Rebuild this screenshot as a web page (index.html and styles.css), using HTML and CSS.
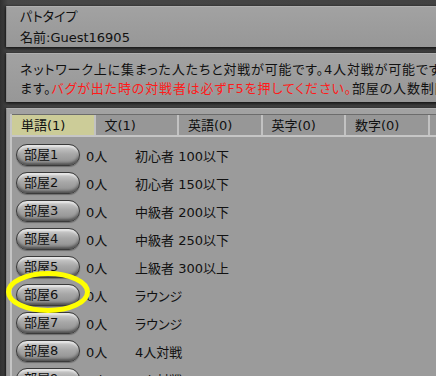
FILE: index.html
```html
<!DOCTYPE html>
<html lang="ja">
<head>
    <meta charset="UTF-8">
    <title>パトタイプ</title>
    <link rel="stylesheet" href="styles.css">
</head>
<body>
    <div class="screen">
        <!-- header -->
        <div class="panel info">
            <div class="line">パトタイプ</div>
            <div class="line">名前:Guest16905</div>
        </div>

        <!-- notice -->
        <div class="panel notice">
            <div class="line">ネットワーク上に集まった人たちと対戦が可能です。4人対戦が可能です。</div>
            <div class="line">ます。<span class="warn">バグが出た時の対戦者は必ずF5を押してください。</span>部屋の人数制限があります。</div>
        </div>

        <!-- room list -->
        <div class="panel rooms">
            <div class="box">
                <div class="tabs">
                    <div class="tab active">単語(1)</div>
                    <div class="tab">文(1)</div>
                    <div class="tab">英語(0)</div>
                    <div class="tab">英字(0)</div>
                    <div class="tab">数字(0)</div>
                    <div class="tab"></div>
                </div>
                <div class="list">
                    <div class="row"><div class="room-btn">部屋1</div><span class="count">0人</span><span class="level">初心者 100以下</span></div>
                    <div class="row"><div class="room-btn">部屋2</div><span class="count">0人</span><span class="level">初心者 150以下</span></div>
                    <div class="row"><div class="room-btn">部屋3</div><span class="count">0人</span><span class="level">中級者 200以下</span></div>
                    <div class="row"><div class="room-btn">部屋4</div><span class="count">0人</span><span class="level">中級者 250以下</span></div>
                    <div class="row"><div class="room-btn">部屋5</div><span class="count">0人</span><span class="level">上級者 300以上</span></div>
                    <div class="row"><div class="room-btn">部屋6</div><span class="count">0人</span><span class="level">ラウンジ</span></div>
                    <div class="row"><div class="room-btn">部屋7</div><span class="count">0人</span><span class="level">ラウンジ</span></div>
                    <div class="row"><div class="room-btn">部屋8</div><span class="count">0人</span><span class="level">4人対戦</span></div>
                    <div class="row"><div class="room-btn">部屋9</div><span class="count">0人</span><span class="level">4人対戦</span></div>
                </div>
            </div>
        </div>

        <!-- highlight mark -->
        <svg class="mark" width="90" height="46" viewBox="0 0 90 46">
            <ellipse cx="45" cy="22" rx="39.5" ry="18.5" fill="none" stroke="#ffff00" stroke-width="5"/>
        </svg>
    </div>
</body>
</html>
```

FILE: styles.css
```css
* {
    margin: 0;
    padding: 0;
    box-sizing: border-box;
}

body {
    width: 436px;
    height: 376px;
    overflow: hidden;
    background: #3a3a3a;
    font-family: "DejaVu Sans", "Noto Sans CJK JP", sans-serif;
    font-size: 13px;
    font-feature-settings: "palt";
    color: #111;
}

.screen {
    position: relative;
    width: 560px;
    padding: 6px 0 0 6px;
    background: linear-gradient(90deg, #303030, #474747 8px, #404040);
}

.panel {
    background: linear-gradient(#a2a2a2, #979797);
    border-top: 1px solid #b0b0b0;
    border-left: 1px solid #8a8a8a;
    box-shadow: 0 2px 3px rgba(0, 0, 0, 0.6), -1px 0 2px rgba(0, 0, 0, 0.4);
    margin-bottom: 6px;
    white-space: nowrap;
    overflow: hidden;
}

.info {
    height: 41px;
    padding: 0 0 0 13px;
    line-height: 20.5px;
}

.notice {
    height: 49px;
    padding: 7px 0 0 13px;
    line-height: 18.5px;
    letter-spacing: 0.85px;
}

.warn {
    color: #ff1a1a;
}

.rooms {
    height: 280px;
    padding: 5px 0 0 3px;
    margin-bottom: 0;
}

.box {
    border-left: 2px solid #c4c4c4;
    height: 100%;
    background: #9b9b9b;
}

.tabs {
    display: flex;
    height: 23px;
    border-top: 1px solid #6c6c6c;
    border-bottom: 2px solid #c6c6c6;
    background: #979797;
}

.tab {
    width: 83.5px;
    flex-shrink: 0;
    padding-left: 9px;
    line-height: 21px;
    border-right: 2px solid #c2c2c2;
}

.tab.active {
    background: #cccc98;
}

.list {
    padding: 7px 0 0 4px;
}

.row {
    display: flex;
    align-items: center;
    height: 22px;
    margin-bottom: 6px;
}

.room-btn {
    width: 64px;
    height: 22px;
    padding-left: 7px;
    line-height: 20px;
    border: 1px solid #3a3a3a;
    border-radius: 11px;
    background: linear-gradient(#d0d0d0, #a8a8a8 45%, #8c8c8c);
    box-shadow: inset 0 -2px 3px rgba(0, 0, 0, 0.45), inset 0 2px 2px rgba(255, 255, 255, 0.6), 0 1px 1px rgba(0, 0, 0, 0.3);
}

.count {
    width: 55px;
    padding-left: 6px;
}

.mark {
    position: absolute;
    left: 3px;
    top: 270px;
}
```
